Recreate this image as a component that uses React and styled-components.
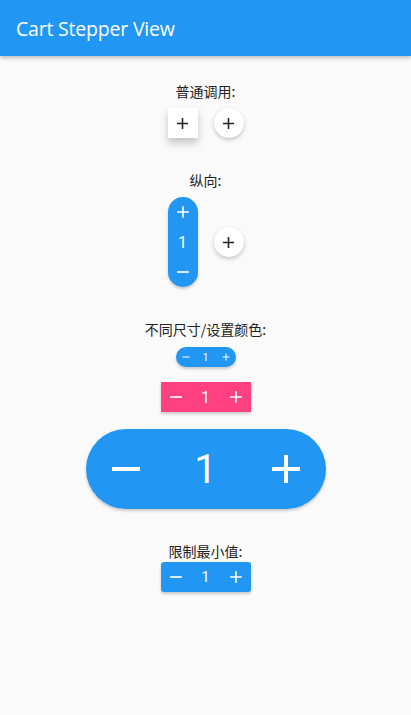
import React from 'react';
import styled, { createGlobalStyle } from 'styled-components';

const GlobalStyle = createGlobalStyle`
  html, body {
    margin: 0;
    padding: 0;
    background: #fafafa;
  }
  body {
    font-family: "Noto Sans", "Noto Sans CJK SC", sans-serif;
  }
`;

const BLUE = '#2196f3';
const PINK = '#ff4081';

const Page = styled.div`
  width: 411px;
  min-height: 715px;
  background: #fafafa;
  display: flex;
  flex-direction: column;
`;

const AppBar = styled.header`
  height: 56px;
  background: ${BLUE};
  box-shadow: 0 2px 4px rgba(0, 0, 0, 0.25);
  display: flex;
  align-items: center;
  padding: 0 16px;
  position: relative;
  z-index: 1;
`;

const Title = styled.h1`
  margin: 0;
  color: #fff;
  font-family: "Open Sans", "Noto Sans", sans-serif;
  font-size: 19.5px;
  font-weight: 400;
  letter-spacing: -0.2px;
`;

const Body = styled.main`
  display: flex;
  flex-direction: column;
  align-items: center;
  padding-top: 25px;
`;

const Label = styled.div`
  font-family: "Noto Sans CJK SC", "Noto Sans", sans-serif;
  font-size: 14px;
  line-height: 20px;
  color: #222;
  margin-top: ${({ $top }) => $top || 0}px;
`;

const Row = styled.div`
  display: flex;
  align-items: center;
  gap: 16px;
  margin-top: ${({ $top }) => $top || 0}px;
`;

const IconButton = styled.button`
  width: 30px;
  height: 30px;
  border: none;
  padding: 0;
  background: #fff;
  color: #222;
  display: flex;
  align-items: center;
  justify-content: center;
  border-radius: ${({ $round }) => ($round ? '50%' : '0')};
  box-shadow: ${({ $round }) =>
    $round ? '0 2px 4px rgba(0,0,0,0.22)' : '0 5px 8px rgba(0,0,0,0.22)'};
`;

const StepperBox = styled.div`
  display: flex;
  flex-direction: ${({ $vertical }) => ($vertical ? 'column' : 'row')};
  background: ${({ $color }) => $color};
  border-radius: ${({ $radius }) => $radius}px;
  box-shadow: 0 2px 3px rgba(0, 0, 0, 0.2);
  color: #fff;
  margin-top: ${({ $top }) => $top || 0}px;
`;

const Cell = styled.div`
  width: ${({ $size }) => $size}px;
  height: ${({ $size }) => $size}px;
  display: flex;
  align-items: center;
  justify-content: center;
`;

const Count = styled(Cell)`
  font-family: Roboto, "Liberation Sans", sans-serif;
  font-size: ${({ $font }) => $font}px;
`;

const AddIcon = ({ size }) => (
  <svg width={size} height={size} viewBox="0 0 24 24" fill="currentColor">
    <path d="M19 13h-6v6h-2v-6H5v-2h6V5h2v6h6v2z" />
  </svg>
);

const RemoveIcon = ({ size }) => (
  <svg width={size} height={size} viewBox="0 0 24 24" fill="currentColor">
    <path d="M19 13H5v-2h14v2z" />
  </svg>
);

const Stepper = ({ size = 30, icon = 20, font = 16, color = BLUE, radius, vertical, top }) => {
  const r = radius === undefined ? size / 2 : radius;
  if (vertical) {
    return (
      <StepperBox $vertical $color={color} $radius={r} $top={top}>
        <Cell $size={size}><AddIcon size={icon} /></Cell>
        <Count $size={size} $font={font}>1</Count>
        <Cell $size={size}><RemoveIcon size={icon} /></Cell>
      </StepperBox>
    );
  }
  return (
    <StepperBox $color={color} $radius={r} $top={top}>
      <Cell $size={size}><RemoveIcon size={icon} /></Cell>
      <Count $size={size} $font={font}>1</Count>
      <Cell $size={size}><AddIcon size={icon} /></Cell>
    </StepperBox>
  );
};

export default function App() {
  return (
    <Page>
      <GlobalStyle />
      <AppBar>
        <Title>Cart Stepper View</Title>
      </AppBar>
      <Body>
        <Label>普通调用:</Label>
        <Row $top={7}>
          <IconButton><AddIcon size={19} /></IconButton>
          <IconButton $round><AddIcon size={19} /></IconButton>
        </Row>

        <Label $top={32}>纵向:</Label>
        <Row $top={7}>
          <Stepper vertical size={30} icon={20} font={16} />
          <IconButton $round><AddIcon size={19} /></IconButton>
        </Row>

        <Label $top={32}>不同尺寸/设置颜色:</Label>
        <Stepper size={20} icon={12} font={10} top={8} />
        <Stepper size={30} icon={20} font={16} color={PINK} radius={0} top={15} />
        <Stepper size={80} icon={48} font={40} top={17} />

        <Label $top={32}>限制最小值:</Label>
        <Stepper size={30} icon={20} font={15} radius={3} top={1} />
      </Body>
    </Page>
  );
}
